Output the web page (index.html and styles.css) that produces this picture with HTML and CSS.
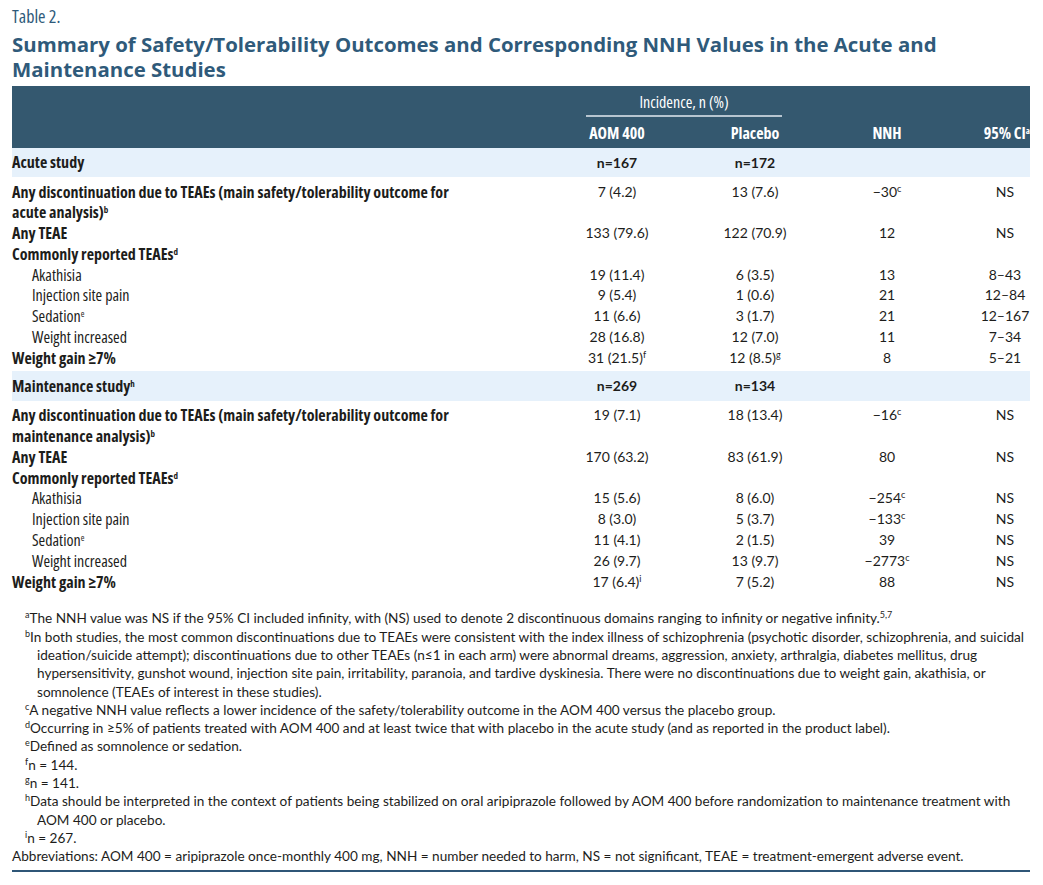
FILE: index.html
```html
<!DOCTYPE html>
<html lang="en">
<head>
    <meta charset="UTF-8">
    <meta name="viewport" content="width=device-width, initial-scale=1.0">
    <title>Table 2. Safety/Tolerability Outcomes and NNH</title>
    <link rel="stylesheet" href="styles.css">
</head>
<body>
    <p class="table-label">Table 2.</p>
    <h1 class="table-title">Summary of Safety/Tolerability Outcomes and Corresponding NNH Values in the Acute and<br>Maintenance Studies</h1>

    <table class="nnh-table">
        <colgroup>
            <col class="col-label">
            <col class="col-aom">
            <col class="col-placebo">
            <col class="col-nnh">
            <col class="col-ci">
        </colgroup>
        <thead>
            <tr class="head-top">
                <th></th>
                <th colspan="2" class="span-head"><div>Incidence, n (%)</div></th>
                <th></th>
                <th></th>
            </tr>
            <tr class="head-bottom">
                <th></th>
                <th>AOM 400</th>
                <th>Placebo</th>
                <th>NNH</th>
                <th class="ci-head">95% CI<sup>a</sup></th>
            </tr>
        </thead>
        <tbody>
            <tr class="band">
                <td>Acute study</td>
                <td>n=167</td>
                <td>n=172</td>
                <td></td>
                <td></td>
            </tr>
            <tr class="main first">
                <td>Any discontinuation due to TEAEs (main safety/tolerability outcome for<br>acute analysis)<sup>b</sup></td>
                <td>7 (4.2)</td>
                <td>13 (7.6)</td>
                <td>&minus;30<sup>c</sup></td>
                <td class="ci">NS</td>
            </tr>
            <tr class="main">
                <td>Any TEAE</td>
                <td>133 (79.6)</td>
                <td>122 (70.9)</td>
                <td>12</td>
                <td class="ci">NS</td>
            </tr>
            <tr class="main">
                <td>Commonly reported TEAEs<sup>d</sup></td>
                <td></td>
                <td></td>
                <td></td>
                <td></td>
            </tr>
            <tr class="sub">
                <td>Akathisia</td>
                <td>19 (11.4)</td>
                <td>6 (3.5)</td>
                <td>13</td>
                <td class="ci">8&ndash;43</td>
            </tr>
            <tr class="sub">
                <td>Injection site pain</td>
                <td>9 (5.4)</td>
                <td>1 (0.6)</td>
                <td>21</td>
                <td class="ci">12&ndash;84</td>
            </tr>
            <tr class="sub">
                <td>Sedation<sup>e</sup></td>
                <td>11 (6.6)</td>
                <td>3 (1.7)</td>
                <td>21</td>
                <td class="ci">12&ndash;167</td>
            </tr>
            <tr class="sub">
                <td>Weight increased</td>
                <td>28 (16.8)</td>
                <td>12 (7.0)</td>
                <td>11</td>
                <td class="ci">7&ndash;34</td>
            </tr>
            <tr class="main last">
                <td>Weight gain &ge;7%</td>
                <td>31 (21.5)<sup>f</sup></td>
                <td>12 (8.5)<sup>g</sup></td>
                <td>8</td>
                <td class="ci">5&ndash;21</td>
            </tr>

            <tr class="band">
                <td>Maintenance study<sup>h</sup></td>
                <td>n=269</td>
                <td>n=134</td>
                <td></td>
                <td></td>
            </tr>
            <tr class="main first">
                <td>Any discontinuation due to TEAEs (main safety/tolerability outcome for<br>maintenance analysis)<sup>b</sup></td>
                <td>19 (7.1)</td>
                <td>18 (13.4)</td>
                <td>&minus;16<sup>c</sup></td>
                <td class="ci">NS</td>
            </tr>
            <tr class="main">
                <td>Any TEAE</td>
                <td>170 (63.2)</td>
                <td>83 (61.9)</td>
                <td>80</td>
                <td class="ci">NS</td>
            </tr>
            <tr class="main">
                <td>Commonly reported TEAEs<sup>d</sup></td>
                <td></td>
                <td></td>
                <td></td>
                <td></td>
            </tr>
            <tr class="sub">
                <td>Akathisia</td>
                <td>15 (5.6)</td>
                <td>8 (6.0)</td>
                <td>&minus;254<sup>c</sup></td>
                <td class="ci">NS</td>
            </tr>
            <tr class="sub">
                <td>Injection site pain</td>
                <td>8 (3.0)</td>
                <td>5 (3.7)</td>
                <td>&minus;133<sup>c</sup></td>
                <td class="ci">NS</td>
            </tr>
            <tr class="sub">
                <td>Sedation<sup>e</sup></td>
                <td>11 (4.1)</td>
                <td>2 (1.5)</td>
                <td>39</td>
                <td class="ci">NS</td>
            </tr>
            <tr class="sub">
                <td>Weight increased</td>
                <td>26 (9.7)</td>
                <td>13 (9.7)</td>
                <td>&minus;2773<sup>c</sup></td>
                <td class="ci">NS</td>
            </tr>
            <tr class="main last">
                <td>Weight gain &ge;7%</td>
                <td>17 (6.4)<sup>i</sup></td>
                <td>7 (5.2)</td>
                <td>88</td>
                <td class="ci">NS</td>
            </tr>
        </tbody>
    </table>

    <div class="notes">
        <p><sup>a</sup>The NNH value was NS if the 95% CI included infinity, with (NS) used to denote 2 discontinuous domains ranging to infinity or negative infinity.<sup>5,7</sup></p>
        <p><sup>b</sup>In both studies, the most common discontinuations due to TEAEs were consistent with the index illness of schizophrenia (psychotic disorder, schizophrenia, and suicidal<br>ideation/suicide attempt); discontinuations due to other TEAEs (n&le;1 in each arm) were abnormal dreams, aggression, anxiety, arthralgia, diabetes mellitus, drug<br>hypersensitivity, gunshot wound, injection site pain, irritability, paranoia, and tardive dyskinesia. There were no discontinuations due to weight gain, akathisia, or<br>somnolence (TEAEs of interest in these studies).</p>
        <p><sup>c</sup>A negative NNH value reflects a lower incidence of the safety/tolerability outcome in the AOM 400 versus the placebo group.</p>
        <p><sup>d</sup>Occurring in &ge;5% of patients treated with AOM 400 and at least twice that with placebo in the acute study (and as reported in the product label).</p>
        <p><sup>e</sup>Defined as somnolence or sedation.</p>
        <p><sup>f</sup>n = 144.</p>
        <p><sup>g</sup>n = 141.</p>
        <p><sup>h</sup>Data should be interpreted in the context of patients being stabilized on oral aripiprazole followed by AOM 400 before randomization to maintenance treatment with<br>AOM 400 or placebo.</p>
        <p><sup>i</sup>n = 267.</p>
        <p class="abbrev">Abbreviations: AOM 400 = aripiprazole once-monthly 400 mg, NNH = number needed to harm, NS = not significant, TEAE = treatment-emergent adverse event.</p>
    </div>
</body>
</html>
```

FILE: styles.css
```css
body {
    margin: 0;
    padding: 6px 13px 0 12px;
    background-color: #ffffff;
    color: #1d1d1b;
    font-family: Lato, "Liberation Sans", sans-serif;
}

/* condensed face for the table labels and headings */
.table-label,
.nnh-table thead,
.nnh-table td:first-child {
    font-family: "Open Sans", sans-serif;
    font-stretch: 75%;
}

.table-label {
    margin: 0;
    font-size: 18px;
    line-height: 21px;
    color: #2f5a7a;
}

.table-title {
    margin: 5px 0 4px;
    font-family: "Open Sans", sans-serif;
    font-size: 20.4px;
    font-weight: 700;
    line-height: 25px;
    color: #2f5a7a;
}

.nnh-table {
    width: 1018px;
    border-collapse: collapse;
    font-size: 14px;
}

.col-label { width: 540px; }
.col-aom { width: 130px; }
.col-placebo { width: 146px; }
.col-nnh { width: 118px; }
.col-ci { width: 84px; }

.nnh-table th,
.nnh-table td {
    padding: 0;
    text-align: center;
    vertical-align: top;
    white-space: nowrap;
}

.nnh-table thead {
    background-color: #34586f;
    color: #ffffff;
    font-size: 16px;
}

.head-top th {
    padding: 5px 0 1px;
    font-weight: 500;
}

.span-head div {
    margin: 0 46px 0 34px;
    padding-bottom: 2px;
    line-height: 22px;
    border-bottom: 2px solid #b7c5d0;
}

.head-bottom th {
    line-height: 30px;
    font-weight: 700;
}

.nnh-table th.ci-head {
    text-align: right;
}

.nnh-table td.ci {
    padding-left: 34px;
}

.nnh-table td:first-child {
    text-align: left;
    font-size: 16px;
}

.band td {
    background-color: #e6f1fb;
    line-height: 29px;
    font-weight: 700;
}

.band + .main td {
    padding-top: 4.5px;
}

.main td,
.sub td {
    line-height: 20.8px;
}

.main td:first-child {
    font-weight: 700;
}

.sub td:first-child {
    padding-left: 20px;
}

.main.last td {
    padding-bottom: 2px;
}

.main.last + .band td {
    line-height: 30px;
}

sup {
    font-size: 9px;
    line-height: 0;
    vertical-align: 5px;
}

.notes {
    margin-top: 15px;
    padding-bottom: 4px;
    border-bottom: 2px solid #2f5677;
    font-size: 13.6px;
    line-height: 18.3px;
}

.notes p {
    margin: 0;
    padding-left: 25px;
    text-indent: -12px;
}

.notes p.abbrev {
    padding-left: 0;
    text-indent: 0;
}
```
